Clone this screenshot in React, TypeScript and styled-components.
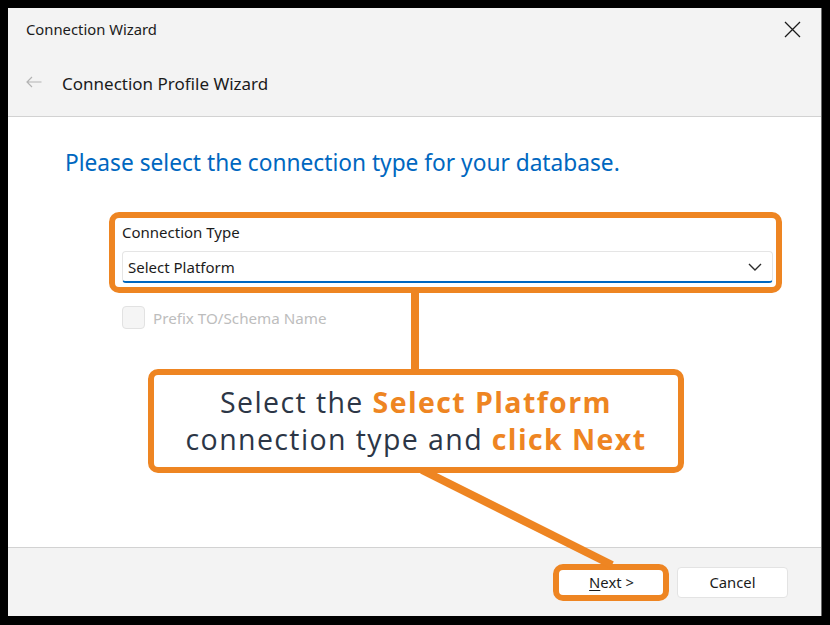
import React from "react";
import styled, { createGlobalStyle } from "styled-components";

const GlobalStyle = createGlobalStyle`
  html, body {
    margin: 0;
    padding: 0;
    background: #000000;
  }
  body {
    width: 830px;
    height: 625px;
    overflow: hidden;
    font-family: "Noto Sans", "Open Sans", sans-serif;
  }
`;

const ORANGE = "#ee8522";

const App = () => {
  return (
    <>
      <GlobalStyle />
      <Window>
        <TitleBar>
          <WindowTitle>Connection Wizard</WindowTitle>
          <CloseButton aria-label="Close">
            <svg width="17" height="17" viewBox="0 0 17 17">
              <path d="M1 1 L16 16 M16 1 L1 16" stroke="#1b1b1b" strokeWidth="1.3" fill="none" />
            </svg>
          </CloseButton>
        </TitleBar>
        <HeaderBar>
          <BackArrow>
            <svg width="16" height="12" viewBox="0 0 16 12">
              <path d="M15.5 6 H1 M6 1 L1 6 L6 11" stroke="#b3b3b3" strokeWidth="1.2" fill="none" />
            </svg>
          </BackArrow>
          <HeaderTitle>Connection Profile Wizard</HeaderTitle>
        </HeaderBar>

        <Content>
          <Heading>Please select the connection type for your database.</Heading>
          <Fields>
            <FieldLabel>Connection Type</FieldLabel>
            <Select>
              <span>Select Platform</span>
              <svg width="14" height="8" viewBox="0 0 14 8">
                <path d="M1 1 L7 7 L13 1" stroke="#2b2b2b" strokeWidth="1.4" fill="none" />
              </svg>
            </Select>
            <CheckRow>
              <CheckBox />
              <CheckText>Prefix TO/Schema Name</CheckText>
            </CheckRow>
          </Fields>
        </Content>

        <Footer>
          <FooterButton>
            <u>N</u>ext &gt;
          </FooterButton>
          <FooterButton>Cancel</FooterButton>
        </Footer>

        {/* annotation overlays */}
        <Highlight $left={101} $top={204} $width={673} $height={81} />
        <Connector />
        <Callout>
          <CalloutLine>
            Select the <Strong>Select Platform</Strong>
          </CalloutLine>
          <CalloutLine>
            connection type and <Strong>click Next</Strong>
          </CalloutLine>
        </Callout>
        <Pointer width="814" height="608" viewBox="0 0 814 608">
          <line x1="414" y1="462" x2="604" y2="557" stroke={ORANGE} strokeWidth="8" />
        </Pointer>
        <Highlight $left={545} $top={556} $width={116} $height={37} />
      </Window>
    </>
  );
};

export default App;

const Window = styled.div`
  position: relative;
  margin: 8px;
  width: 814px;
  height: 608px;
  display: flex;
  flex-direction: column;
  background: #f3f3f3;
  box-sizing: border-box;
  border-right: 1px solid #6b6b6b;
`;

const TitleBar = styled.div`
  height: 42px;
  display: flex;
  align-items: center;
  justify-content: space-between;
  padding: 0 20px 0 18px;
`;

const WindowTitle = styled.div`
  font-size: 14.8px;
  color: #1b1b1b;
`;

const CloseButton = styled.div`
  display: flex;
  align-items: center;
`;

const HeaderBar = styled.div`
  height: 66px;
  display: flex;
  align-items: center;
  gap: 20px;
  padding-left: 18px;
  border-bottom: 1px solid #d2d2d2;
`;

const BackArrow = styled.div`
  display: flex;
  align-items: center;
  margin-top: -2px;
`;

const HeaderTitle = styled.div`
  font-size: 17px;
  color: #1b1b1b;
`;

const Content = styled.div`
  flex: 1;
  background: #ffffff;
  padding: 31px 0 0 57px;
  display: flex;
  flex-direction: column;
  border-bottom: 1px solid #d2d2d2;
`;

const Heading = styled.h1`
  margin: 0;
  font-weight: 400;
  font-size: 22.7px;
  line-height: 30px;
  color: #0067c0;
`;

const Fields = styled.div`
  margin: 44px 0 0 57px;
  width: 651px;
  display: flex;
  flex-direction: column;
`;

const FieldLabel = styled.div`
  font-size: 15px;
  line-height: 20px;
  color: #1b1b1b;
`;

const Select = styled.div`
  margin-top: 9px;
  height: 32px;
  box-sizing: border-box;
  border: 1px solid #e5e5e5;
  border-bottom: 2px solid #0067c0;
  border-radius: 4px;
  display: flex;
  align-items: center;
  justify-content: space-between;
  padding: 0 10px 0 5px;
  font-size: 15px;
  color: #1b1b1b;
`;

const CheckRow = styled.div`
  margin-top: 23px;
  display: flex;
  align-items: center;
  gap: 8px;
`;

const CheckBox = styled.div`
  width: 23px;
  height: 23px;
  box-sizing: border-box;
  border: 1px solid #e2e2e2;
  border-radius: 4px;
  background: #f5f5f5;
`;

const CheckText = styled.div`
  font-size: 15.2px;
  color: #bdbdbd;
`;

const Footer = styled.div`
  height: 68px;
  display: flex;
  align-items: center;
  justify-content: flex-end;
  gap: 10px;
  padding-right: 33px;
`;

const FooterButton = styled.div`
  width: 111px;
  height: 31px;
  box-sizing: border-box;
  background: #ffffff;
  border: 1px solid #e3e3e3;
  border-radius: 4px;
  display: flex;
  align-items: center;
  justify-content: center;
  font-size: 14.8px;
  color: #1b1b1b;

  u {
    text-underline-offset: 2px;
  }
`;

const Highlight = styled.div<{ $left: number; $top: number; $width: number; $height: number }>`
  position: absolute;
  left: ${(p) => p.$left}px;
  top: ${(p) => p.$top}px;
  width: ${(p) => p.$width}px;
  height: ${(p) => p.$height}px;
  box-sizing: border-box;
  border: 6px solid ${ORANGE};
  border-radius: 10px;
  pointer-events: none;
`;

const Connector = styled.div`
  position: absolute;
  left: 403px;
  top: 284px;
  width: 8px;
  height: 78px;
  background: ${ORANGE};
`;

const Callout = styled.div`
  position: absolute;
  left: 140px;
  top: 361px;
  width: 536px;
  height: 104px;
  box-sizing: border-box;
  border: 6px solid ${ORANGE};
  border-radius: 10px;
  background: #ffffff;
  display: flex;
  flex-direction: column;
  align-items: center;
  justify-content: center;
  z-index: 2;
  font-family: "Open Sans", "Noto Sans", sans-serif;
`;

const CalloutLine = styled.div`
  font-size: 28.5px;
  line-height: 37px;
  letter-spacing: 1.4px;
  color: #2c3646;
  white-space: nowrap;
`;

const Strong = styled.span`
  font-weight: 700;
  color: ${ORANGE};
`;

const Pointer = styled.svg`
  position: absolute;
  left: 0;
  top: 0;
  pointer-events: none;
  z-index: 1;
`;
